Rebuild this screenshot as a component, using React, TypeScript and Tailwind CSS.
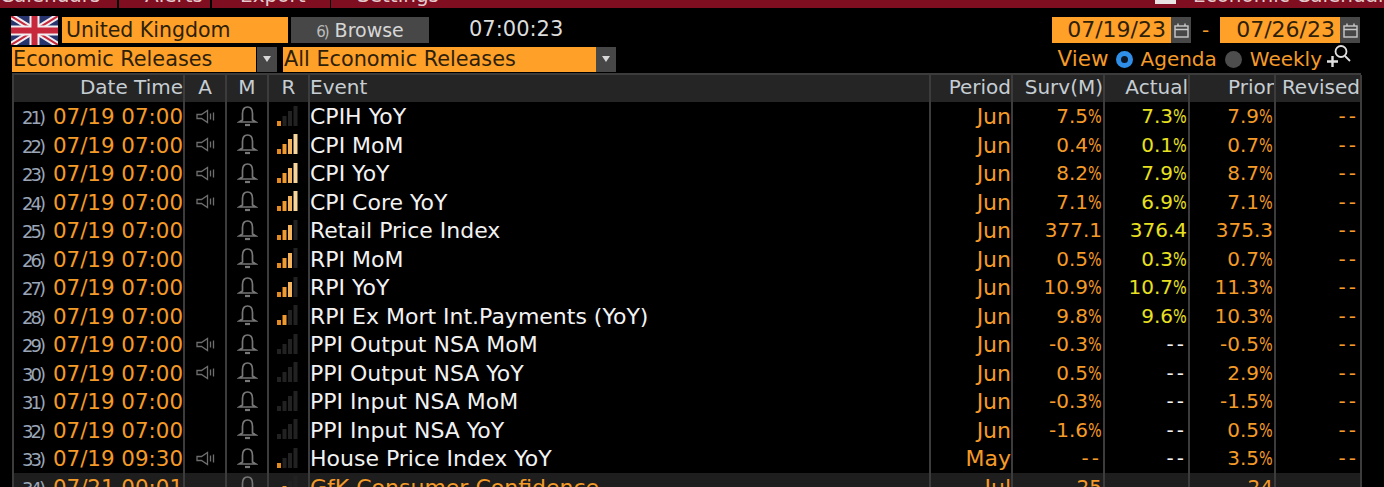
import type { ReactNode } from "react";

const FONT = "font-['DejaVu_Sans',sans-serif]";

type Row = { n: number; dt: string; a: boolean; r: number; ev: string; p: string; s: string; ac: string; pr: string };

const rows: Row[] = [
  { n: 21, dt: "07/19 07:00", a: true, r: 1, ev: "CPIH YoY", p: "Jun", s: "7.5%", ac: "7.3%", pr: "7.9%" },
  { n: 22, dt: "07/19 07:00", a: true, r: 4, ev: "CPI MoM", p: "Jun", s: "0.4%", ac: "0.1%", pr: "0.7%" },
  { n: 23, dt: "07/19 07:00", a: true, r: 4, ev: "CPI YoY", p: "Jun", s: "8.2%", ac: "7.9%", pr: "8.7%" },
  { n: 24, dt: "07/19 07:00", a: true, r: 4, ev: "CPI Core YoY", p: "Jun", s: "7.1%", ac: "6.9%", pr: "7.1%" },
  { n: 25, dt: "07/19 07:00", a: false, r: 3, ev: "Retail Price Index", p: "Jun", s: "377.1", ac: "376.4", pr: "375.3" },
  { n: 26, dt: "07/19 07:00", a: false, r: 3, ev: "RPI MoM", p: "Jun", s: "0.5%", ac: "0.3%", pr: "0.7%" },
  { n: 27, dt: "07/19 07:00", a: false, r: 3, ev: "RPI YoY", p: "Jun", s: "10.9%", ac: "10.7%", pr: "11.3%" },
  { n: 28, dt: "07/19 07:00", a: false, r: 2, ev: "RPI Ex Mort Int.Payments (YoY)", p: "Jun", s: "9.8%", ac: "9.6%", pr: "10.3%" },
  { n: 29, dt: "07/19 07:00", a: true, r: 0, ev: "PPI Output NSA MoM", p: "Jun", s: "-0.3%", ac: "--", pr: "-0.5%" },
  { n: 30, dt: "07/19 07:00", a: true, r: 0, ev: "PPI Output NSA YoY", p: "Jun", s: "0.5%", ac: "--", pr: "2.9%" },
  { n: 31, dt: "07/19 07:00", a: false, r: 0, ev: "PPI Input NSA MoM", p: "Jun", s: "-0.3%", ac: "--", pr: "-1.5%" },
  { n: 32, dt: "07/19 07:00", a: false, r: 0, ev: "PPI Input NSA YoY", p: "Jun", s: "-1.6%", ac: "--", pr: "0.5%" },
  { n: 33, dt: "07/19 09:30", a: true, r: 1, ev: "House Price Index YoY", p: "May", s: "--", ac: "--", pr: "3.5%" },
  { n: 34, dt: "07/21 00:01", a: false, r: 2, ev: "GfK Consumer Confidence", p: "Jul", s: "-25", ac: "--", pr: "-24" },
];

const GRID = "grid grid-cols-[171px_42px_42px_41px_621px_82px_92px_85px_86px_86px]";
const CELL = "border-r-2 border-[#3c3c3c] h-full";

function Flag() {
  return (
    <svg width="47" height="29" viewBox="0 0 47 29" className="shrink-0">
      <rect width="47" height="29" fill="#27346e" />
      <path d="M0 0 47 29M47 0 0 29" stroke="#f2eef0" strokeWidth="6" />
      <path d="M0 0 47 29M47 0 0 29" stroke="#c8283c" strokeWidth="2" />
      <path d="M23.5 0V29M0 14.5H47" stroke="#f2eef0" strokeWidth="10" />
      <path d="M23.5 0V29M0 14.5H47" stroke="#c8283c" strokeWidth="6" />
    </svg>
  );
}

function Cal() {
  return (
    <div className="w-5 h-[26px] bg-[#474747] flex items-center justify-center shrink-0">
      <svg width="15" height="15" viewBox="0 0 15 15" fill="none" stroke="#c9c9c9" strokeWidth="1.4">
        <rect x="1" y="3" width="13" height="11" />
        <path d="M1 6.5H14M4 0.5V3M11 0.5V3" />
      </svg>
    </div>
  );
}

function Caret() {
  return (
    <div className="w-5 h-[25px] bg-[#474747] flex items-center justify-center shrink-0">
      <svg width="8" height="6" viewBox="0 0 8 6"><path d="M0 0H8L4 6Z" fill="#d8d8d8" /></svg>
    </div>
  );
}

function Speaker() {
  return (
    <svg width="19" height="15" viewBox="0 0 19 15" fill="none" stroke="#6e6e6e" strokeWidth="1.3">
      <path d="M1 5.5H5.5L11.5 1.5V13.5L5.5 9.5H1Z" />
      <path d="M14.5 4.5V10.5M17.5 3.5V11.5" />
    </svg>
  );
}

function Bell() {
  return (
    <svg width="21" height="21" viewBox="0 0 21 21" fill="none" stroke="#777777" strokeWidth="1.7">
      <path d="M5.5 14V7.5C5.5 3.5 7.5 1 10.5 1S15.5 3.5 15.5 7.5V14L19 16H2Z" />
      <path d="M8 19H13" strokeWidth="2.2" />
    </svg>
  );
}

function Bars({ level }: { level: number }) {
  const colors = ["#e58a1f", "#f09a30", "#f4b45e", "#f8d59c"];
  return (
    <svg width="22" height="21" viewBox="0 0 22 21" className="-ml-[3px]">
      {[0, 1, 2, 3].map((i) => {
        const h = 5 + i * 5;
        return <rect key={i} x={1 + i * 5.5} y={20 - h} width="4" height={h} fill={i < level ? colors[i] : "#222222"} />;
      })}
    </svg>
  );
}

function Clipped({ children }: { children: ReactNode }) {
  return <span className="block text-[#e6c9cc] text-[20px] leading-[24px] -mt-[17px] whitespace-nowrap">{children}</span>;
}

function Tab({ w, pl, children }: { w: string; pl: string; children: string }) {
  return (
    <div className={`${w} ${pl} h-[8px] bg-[#7f0e20] overflow-hidden shrink-0`}>
      <Clipped>{children}</Clipped>
    </div>
  );
}

function Head({ children, cls = "text-right" }: { children?: string; cls?: string }) {
  return <div className={`${CELL} ${cls} text-[#c6cdd3] leading-[25px] whitespace-nowrap overflow-hidden`}>{children}</div>;
}

function Num({ v }: { v: string }) {
  if (v === "--") return <span className="tracking-[3px]">{v}</span>;
  if (!v.endsWith("%")) return <>{v}</>;
  return (
    <>
      {v.slice(0, -1)}
      <span className="inline-block w-[14px] origin-left scale-x-[0.72]">%</span>
    </>
  );
}

function Data({ v, color }: { v: string; color: string }) {
  return <div className={`${CELL} text-right leading-[29px] whitespace-nowrap overflow-hidden pr-[1px] ${color}`}><Num v={v} /></div>;
}

export default function App() {
  return (
    <div className={`${FONT} w-[1384px] h-[487px] bg-black overflow-hidden text-[20px] flex flex-col`}>
      <div className="h-[9px] flex shrink-0 bg-black">
        <Tab w="w-[117px]" pl="pl-0">Calendars</Tab>
        <div className="w-[2px] shrink-0" />
        <Tab w="w-[91px]" pl="pl-[26px]">Alerts</Tab>
        <div className="w-[2px] shrink-0" />
        <Tab w="w-[118px]" pl="pl-[28px]">Export</Tab>
        <div className="w-[1px] shrink-0" />
        <div className="flex-1 h-[8px] bg-[#7f0e20] flex overflow-hidden">
          <div className="w-[824px] pl-[26px] shrink-0"><Clipped>Settings</Clipped></div>
          <div className="w-[21px] h-[4px] bg-[#e8e4e4] shrink-0" />
          <div className="ml-[17px] shrink-0"><Clipped>Economic Calendars</Clipped></div>
        </div>
      </div>

      <div className="flex items-center h-[36px] pl-[11px] pr-6 shrink-0 mt-[3px]">
        <Flag />
        <div className="ml-[4px] w-[226px] h-[26px] bg-[#ffa028] text-[#2e1f08] text-[20.5px] leading-[26px] pl-1 whitespace-nowrap">United Kingdom</div>
        <div className="ml-[3px] w-[138px] h-[26px] bg-[#474747] text-[#d6d6d6] leading-[26px] text-center text-[19px]"><span className="text-[15px] text-[#bbbbbb] tracking-[-2px] mr-[7px]">6)</span>Browse</div>
        <div className="ml-[40px] text-[#dcdcdc] text-[21px]">07:00:23</div>
        <div className="ml-auto w-[119px] h-[26px] bg-[#ffa028] text-[#2e1f08] text-[22px] leading-[26px] text-right pr-[5px] whitespace-nowrap">07/19/23</div>
        <Cal />
        <div className="w-[29px] text-center text-[#f39a28]">-</div>
        <div className="w-[120px] h-[26px] bg-[#ffa028] text-[#2e1f08] text-[22px] leading-[26px] text-right pr-[5px] whitespace-nowrap">07/26/23</div>
        <Cal />
      </div>

      <div className="flex items-center h-[26px] pl-[12px] shrink-0 -mt-[2px] text-[20.8px]">
        <div className="w-[244px] h-[25px] bg-[#ffa028] text-[#2e1f08] leading-[25px] pl-[1px] whitespace-nowrap">Economic Releases</div>
        <div className="ml-[1px]"><Caret /></div>
        <div className="ml-[6px] w-[313px] h-[25px] bg-[#ffa028] text-[#2e1f08] leading-[25px] pl-[1px] whitespace-nowrap">All Economic Releases</div>
        <Caret />
        <div className="ml-auto mr-[33px] flex items-center text-[#f39a28] text-[20px]">
          <span className="text-[21.5px]">View</span>
          <span className="ml-[7px] w-[17px] h-[17px] rounded-full border-[5px] border-[#2f8fe8] bg-[#0b1420]" />
          <span className="ml-[8px]">Agenda</span>
          <span className="ml-[8px] w-[17px] h-[17px] rounded-full bg-[#4d4d4d]" />
          <span className="ml-[8px]">Weekly</span>
          <svg width="24" height="22" viewBox="0 0 24 22" fill="none" stroke="#e0e0e0" strokeWidth="1.8" className="ml-[5px] -mt-[6px] shrink-0">
            <circle cx="14" cy="6.5" r="5.5" />
            <path d="M18 11 23 16" />
            <path d="M0 16.5H11M5.5 11V22" strokeWidth="2.4" />
          </svg>
        </div>
      </div>

      <div className="ml-[12px] w-[1349px] border-t-2 border-l-2 border-[#3c3c3c] mt-[1px]">
        <div className={`${GRID} h-[27px] bg-[#252525]`}>
          <Head>Date Time</Head>
          <Head cls="text-center">A</Head>
          <Head cls="text-center">M</Head>
          <Head cls="text-center">R</Head>
          <Head cls="text-left">Event</Head>
          <Head>Period</Head>
          <Head>Surv(M)</Head>
          <Head>Actual</Head>
          <Head>Prior</Head>
          <Head>Revised</Head>
        </div>
        {rows.map((r) => {
          const future = r.n === 34;
          return (
            <div key={r.n} className={`${GRID} h-[28.5px] ${future ? "bg-[#1e1e1e]" : ""} text-[22px]`}>
              <div className={`${CELL} text-right text-[21.4px] leading-[29px] whitespace-nowrap overflow-hidden text-[#f39a28]`}>
                <span className="text-[#9aa6b8] text-[18px] tracking-[-3px] mr-[10px]">{r.n})</span>
                {r.dt}
              </div>
              <div className={`${CELL} flex items-center justify-center`}>{r.a && <Speaker />}</div>
              <div className={`${CELL} flex items-center justify-center`}><Bell /></div>
              <div className={`${CELL} flex items-center justify-center`}><Bars level={r.r} /></div>
              <div className={`${CELL} leading-[29px] whitespace-nowrap overflow-hidden ${future ? "text-[#f39a28]" : "text-[#f2f2f2]"}`}>{r.ev}</div>
              <div className={`${CELL} text-right leading-[29px] whitespace-nowrap overflow-hidden text-[#f39a28] text-[22px]`}>{r.p}</div>
              <Data v={r.s} color="text-[#f39a28] text-[20px]" />
              <Data v={r.ac} color={r.ac === "--" ? "text-[#f2f2f2] text-[20px]" : "text-[#e8e020] text-[20px]"} />
              <Data v={r.pr} color="text-[#f39a28] text-[20px]" />
              <Data v="--" color="text-[#f39a28] text-[20px]" />
            </div>
          );
        })}
      </div>
    </div>
  );
}
